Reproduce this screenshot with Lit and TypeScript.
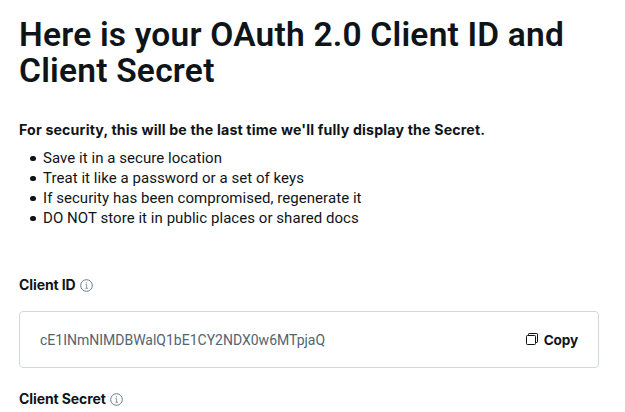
import { LitElement, html, css } from "lit";
import { customElement, property } from "lit/decorators.js";

@customElement("info-label")
export class InfoLabel extends LitElement {
  @property() text = "";

  static styles = css`
    :host {
      display: flex;
      align-items: center;
      gap: 4px;
      height: 20px;
    }
    .text {
      font: 700 14px/20px Inter, sans-serif;
      letter-spacing: -0.1px;
    }
    .icon {
      display: block;
      width: 13px;
      height: 13px;
      margin-top: 1px;
      fill: none;
      stroke: #66788a;
    }
  `;

  render() {
    return html`
      <span class="text">${this.text}</span>
      <svg class="icon" viewBox="0 0 13 13">
        <circle cx="6.5" cy="6.5" r="5.8" stroke-width="1" />
        <path d="M5.4 5.7H6.6V9.3M5.3 9.3H7.9" stroke-width=".75" />
        <circle cx="6.4" cy="3.8" r=".6" fill="#66788a" stroke="none" />
      </svg>
    `;
  }
}

@customElement("app-root")
export class AppRoot extends LitElement {
  static styles = css`
    :host {
      display: block;
      box-sizing: border-box;
      height: 412px;
      overflow: hidden;
      padding: 17px 26px 0 19px;
      background: #fff;
      color: #0f1419;
      font-family: Roboto, sans-serif;
    }
    h1 {
      margin: 0;
      font-size: 33.5px;
      font-weight: 600;
      line-height: 36px;
      letter-spacing: 0.25px;
      word-spacing: -0.2px;
    }
    .notice {
      margin: 31px 0 0;
      font: 700 14.2px/20px Inter, sans-serif;
      letter-spacing: 0.16px;
    }
    ul {
      margin: 8px 0 0;
      padding: 0;
      list-style: none;
    }
    li {
      display: flex;
      align-items: center;
      gap: 7.5px;
      padding-left: 11px;
      font-size: 15px;
      line-height: 20px;
      letter-spacing: 0.05px;
    }
    li::before {
      content: "";
      width: 5.5px;
      height: 5.5px;
      border-radius: 50%;
      background: currentColor;
      margin-top: 1px;
    }
    .first {
      margin-top: 47px;
    }
    .field {
      display: flex;
      align-items: center;
      justify-content: space-between;
      box-sizing: border-box;
      height: 57px;
      margin: 16px 0 21px;
      padding: 0 20px;
      border: 1px solid #cfd9de;
      border-radius: 4px;
    }
    .value {
      color: #536471;
      font-size: 14px;
      line-height: 20px;
    }
    .copy {
      display: flex;
      align-items: center;
      gap: 6px;
      padding: 0;
      border: 0;
      background: none;
      color: inherit;
      font: 700 13.6px/20px Inter, sans-serif;
      letter-spacing: -0.15px;
    }
    .copy svg {
      display: block;
      width: 12px;
      height: 12px;
      margin-top: -2px;
      fill: none;
      stroke: currentColor;
    }
  `;

  private rules = [
    "Save it in a secure location",
    "Treat it like a password or a set of keys",
    "If security has been compromised, regenerate it",
    "DO NOT store it in public places or shared docs",
  ];

  render() {
    return html`
      <h1>Here is your OAuth 2.0 Client ID and Client Secret</h1>
      <p class="notice">For security, this will be the last time we'll fully display the Secret.</p>
      <ul>
        ${this.rules.map((rule) => html`<li>${rule}</li>`)}
      </ul>
      <info-label class="first" text="Client ID"></info-label>
      <div class="field">
        <span class="value">cE1INmNIMDBWalQ1bE1CY2NDX0w6MTpjaQ</span>
        <button class="copy">
          <svg viewBox="0 0 12 12">
            <rect x=".5" y="2.5" width="9" height="9" rx=".8" />
            <path d="M2.5 2.5V1.2Q2.5.5 3.2.5H10.8Q11.5.5 11.5 1.2V8.8Q11.5 9.5 10.8 9.5H9.5" />
          </svg>
          Copy
        </button>
      </div>
      <info-label text="Client Secret"></info-label>
    `;
  }
}
